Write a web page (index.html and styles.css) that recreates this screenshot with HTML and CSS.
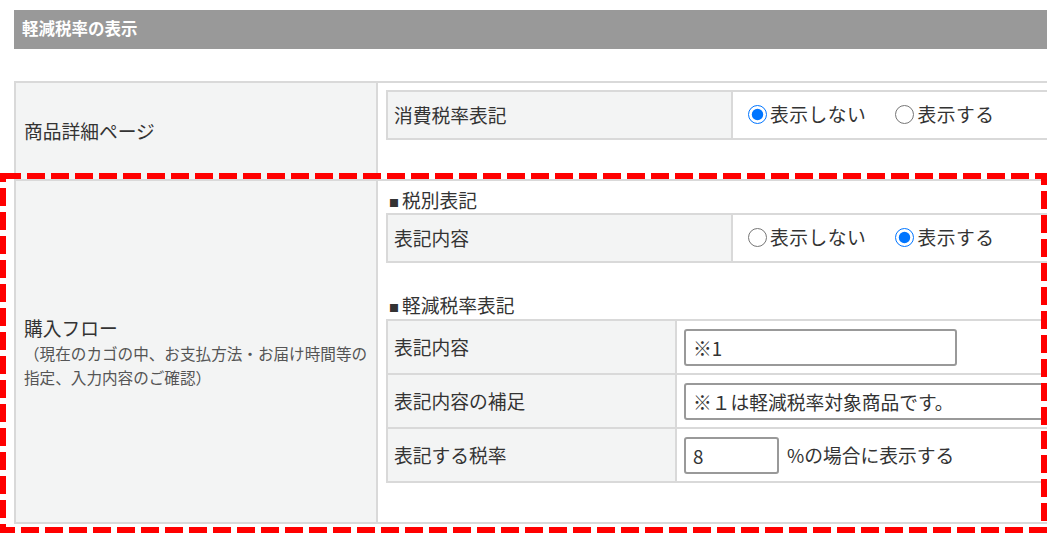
FILE: index.html
```html
<!DOCTYPE html>
<html lang="ja">
<head>
    <meta charset="UTF-8">
    <meta name="viewport" content="width=device-width, initial-scale=1.0">
    <title>軽減税率の表示</title>
    <link rel="stylesheet" href="styles.css">
</head>
<body>

    <div class="page">
        <h2 class="section-title">軽減税率の表示</h2>

        <table class="setting-table">
            <tr>
                <th>商品詳細ページ</th>
                <td>
                    <table class="item-table item-table-radio">
                        <tr>
                            <th>消費税率表記</th>
                            <td>
                                <label class="radio"><input type="radio" name="detail_tax" checked>表示しない</label>
                                <label class="radio"><input type="radio" name="detail_tax">表示する</label>
                            </td>
                        </tr>
                    </table>
                </td>
            </tr>
            <tr>
                <th>
                    購入フロー
                    <span class="note">（現在のカゴの中、お支払方法・お届け時間等の<br>指定、入力内容のご確認）</span>
                </th>
                <td class="flow-cell">
                    <h3 class="sub-title"><span class="mark">■</span>税別表記</h3>
                    <table class="item-table item-table-radio">
                        <tr>
                            <th>表記内容</th>
                            <td>
                                <label class="radio"><input type="radio" name="flow_tax">表示しない</label>
                                <label class="radio"><input type="radio" name="flow_tax" checked>表示する</label>
                            </td>
                        </tr>
                    </table>

                    <h3 class="sub-title sub-title-next"><span class="mark">■</span>軽減税率表記</h3>
                    <table class="item-table item-table-input">
                        <tr>
                            <th>表記内容</th>
                            <td><input type="text" class="text-input text-input-mark" value="※1"></td>
                        </tr>
                        <tr>
                            <th>表記内容の補足</th>
                            <td><input type="text" class="text-input text-input-note" value="※１は軽減税率対象商品です。"></td>
                        </tr>
                        <tr>
                            <th>表記する税率</th>
                            <td><input type="text" class="text-input text-input-rate" value="8"><span class="unit">%の場合に表示する</span></td>
                        </tr>
                    </table>
                </td>
            </tr>
        </table>
    </div>

    <!-- highlight frame -->
    <svg class="highlight" width="1047" height="360" viewBox="0 0 1047 360">
        <rect x="3" y="3" width="1041" height="354" fill="none" stroke="#ff0000" stroke-width="6" stroke-dasharray="18 6" shape-rendering="crispEdges"/>
    </svg>

</body>
</html>
```

FILE: styles.css
```css
/* base */
html {
    overflow: hidden;
}

body {
    margin: 0;
    background: #ffffff;
    color: #333333;
    font-family: "Noto Sans CJK JP", "Noto Sans", sans-serif;
    font-size: 18.75px;
    line-height: 26px;
}

.page {
    width: 1100px;
    padding: 10px 0 0 14px;
}

/* title bar */
.section-title {
    margin: 0 0 32px;
    height: 39px;
    padding-left: 8px;
    background: #999999;
    color: #ffffff;
    font-size: 16.5px;
    font-weight: bold;
    line-height: 36px;
}

/* common tables */
.setting-table,
.item-table {
    width: 100%;
    border-collapse: separate;
    border-spacing: 0;
    table-layout: fixed;
    border-top: 2px solid #d9d9d9;
    border-left: 2px solid #d9d9d9;
}

.setting-table > tbody > tr > th,
.setting-table > tbody > tr > td,
.item-table th,
.item-table td {
    box-sizing: border-box;
    border-right: 2px solid #d9d9d9;
    border-bottom: 2px solid #d9d9d9;
    padding: 0;
}

.setting-table th,
.item-table th {
    background: #f3f4f4;
    font-weight: normal;
    text-align: left;
    vertical-align: middle;
}

/* outer table */
.setting-table > tbody > tr > th {
    width: 362px;
    padding: 0 8px;
}

.setting-table > tbody > tr > td {
    vertical-align: top;
    padding: 7px 0 0 8px;
}

.setting-table > tbody > tr > td.flow-cell {
    padding-top: 6px;
}

.setting-table .note {
    display: block;
    color: #555555;
    font-size: 15.6px;
    line-height: 24px;
}

.item-table {
    margin-bottom: 39px;
}

.sub-title {
    height: 26px;
    margin: 0;
    font-size: 18.75px;
    font-weight: normal;
    line-height: 26px;
}

.sub-title-next {
    margin-top: -10px;
    margin-bottom: 1px;
}

.sub-title .mark {
    display: inline-block;
    margin: 0 3px 0 3px;
    font-size: 10px;
    line-height: 10px;
    vertical-align: 1px;
}

/* radio rows */
.item-table-radio th {
    width: 345px;
    height: 48px;
    padding-left: 6px;
}

.item-table-radio td {
    height: 48px;
    padding-left: 15px;
    background: #ffffff;
}

.radio {
    display: inline-flex;
    align-items: center;
    margin-right: 25px;
    letter-spacing: 0.5px;
}

.radio input {
    width: 19px;
    height: 19px;
    margin: 0 3px 0 0;
}

/* input rows */
.item-table-input th {
    width: 289px;
    height: 54px;
    padding-left: 6px;
}

.item-table-input td {
    height: 54px;
    padding-left: 7px;
    background: #ffffff;
}

.text-input {
    box-sizing: border-box;
    height: 37px;
    padding: 0 7px;
    border: 2px solid #999999;
    border-radius: 3px;
    color: #333333;
    font-family: "Noto Sans CJK JP", "Noto Sans", sans-serif;
    font-size: 18.75px;
    vertical-align: middle;
}

.text-input-mark {
    width: 273px;
}

.text-input-note {
    width: 420px;
}

.text-input-rate {
    width: 95px;
}

.unit {
    margin-left: 8px;
    vertical-align: middle;
}

/* red dashed frame */
.highlight {
    position: absolute;
    top: 173px;
    left: 0;
    pointer-events: none;
}
```
